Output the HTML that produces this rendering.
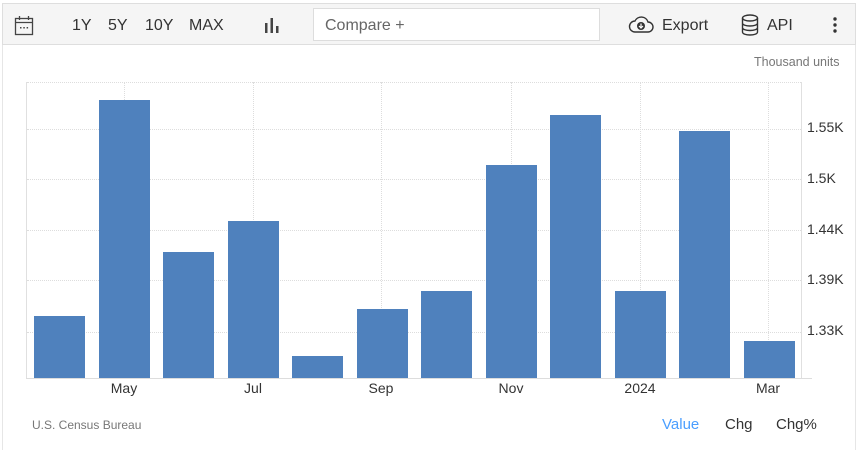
<!DOCTYPE html>
<html><head><style>
body{margin:0;width:858px;height:450px;background:#fff;font-family:"Liberation Sans",Arial,sans-serif;position:relative;overflow:hidden}
.frame{position:absolute;left:2px;top:3px;width:852px;height:447px;border-left:1px solid #e6e6e6;border-right:1px solid #e6e6e6}
.tb{position:absolute;left:2px;top:3px;width:852px;height:40px;background:#f5f5f5;border:1px solid #dedede}
.t{position:absolute;font-size:16px;color:#333;top:17px}
.cmp{position:absolute;left:313px;top:8px;width:287px;height:33px;background:#fff;border:1px solid #ddd;font-size:16px;color:#666;line-height:33px;text-indent:11px;box-sizing:border-box}
.bar{position:absolute;background:#4f81bd;width:51px}
.hg{position:absolute;left:27px;width:774px;border-top:1px dotted #ddd}
.vg{position:absolute;top:82px;height:296px;border-left:1px dotted #ddd}
.yl{position:absolute;left:807px;font-size:14px;color:#333}
.xl{position:absolute;top:380px;font-size:14px;color:#333;transform:translateX(-50%)}
</style></head><body>
<div class="frame"></div>
<div class="tb"></div>
<svg style="position:absolute;left:14px;top:15px" width="20" height="22" viewBox="0 0 20 22"><rect x="1.5" y="3.5" width="17" height="16" fill="none" stroke="#444" stroke-width="1.3"/><line x1="1.5" y1="7.5" x2="18.5" y2="7.5" stroke="#444" stroke-width="1.3"/><line x1="5.5" y1="1" x2="5.5" y2="5" stroke="#444" stroke-width="1.3"/><line x1="14.5" y1="1" x2="14.5" y2="5" stroke="#444" stroke-width="1.3"/><rect x="6" y="12" width="1.5" height="1.5" fill="#444"/><rect x="9.3" y="12" width="1.5" height="1.5" fill="#444"/><rect x="12.6" y="12" width="1.5" height="1.5" fill="#444"/></svg>
<div class="t" style="left:72px">1Y</div>
<div class="t" style="left:108px">5Y</div>
<div class="t" style="left:145px">10Y</div>
<div class="t" style="left:189px">MAX</div>
<svg style="position:absolute;left:264px;top:17px" width="16" height="16"><rect x="1" y="6" width="2.5" height="10" fill="#444"/><rect x="6.5" y="1" width="2.5" height="15" fill="#444"/><rect x="12" y="9" width="2.5" height="7" fill="#444"/></svg>
<div class="cmp">Compare +</div>
<svg style="position:absolute;left:628px;top:15px" width="26" height="20" viewBox="0 0 26 20"><path d="M7 17 H20 a5 5 0 0 0 0-10 a7 7 0 0 0-13-1 a5.5 5.5 0 0 0 0 11z" fill="none" stroke="#333" stroke-width="1.4"/><circle cx="13" cy="11" r="4" fill="#333"/><path d="M13 8.5v4.5M11 11l2 2 2-2" stroke="#fff" stroke-width="1.2" fill="none"/></svg>
<div class="t" style="left:662px">Export</div>
<svg style="position:absolute;left:741px;top:14px" width="18" height="22" viewBox="0 0 18 22"><ellipse cx="9" cy="4" rx="7.5" ry="3" fill="none" stroke="#333" stroke-width="1.4"/><path d="M1.5 4v14c0 4 15 4 15 0V4M1.5 9c0 4 15 4 15 0M1.5 13.5c0 4 15 4 15 0" fill="none" stroke="#333" stroke-width="1.4"/></svg>
<div class="t" style="left:767px">API</div>
<svg style="position:absolute;left:832px;top:17px" width="6" height="16"><circle cx="3" cy="2" r="1.7" fill="#333"/><circle cx="3" cy="8" r="1.7" fill="#333"/><circle cx="3" cy="14" r="1.7" fill="#333"/></svg>
<div style="position:absolute;left:754px;top:55px;font-size:12.5px;color:#777">Thousand units</div>

<div class="hg" style="top:82px"></div>
<div class="hg" style="top:129px"></div>
<div class="hg" style="top:179px"></div>
<div class="hg" style="top:230px"></div>
<div class="hg" style="top:280px"></div>
<div class="hg" style="top:332px"></div>
<div class="vg" style="left:124px"></div>
<div class="vg" style="left:253px"></div>
<div class="vg" style="left:381px"></div>
<div class="vg" style="left:511px"></div>
<div class="vg" style="left:640px"></div>
<div class="vg" style="left:768px"></div>
<div style="position:absolute;left:26px;top:82px;width:1px;height:297px;background:#e0e0e0"></div>
<div style="position:absolute;left:801px;top:82px;width:1px;height:297px;background:#e0e0e0"></div>
<div style="position:absolute;left:26px;top:378px;width:786px;height:1px;background:#ddd"></div>

<div class="bar" style="left:34px;top:316px;height:62px"></div>
<div class="bar" style="left:99px;top:100px;height:278px"></div>
<div class="bar" style="left:163px;top:252px;height:126px"></div>
<div class="bar" style="left:228px;top:221px;height:157px"></div>
<div class="bar" style="left:292px;top:356px;height:22px"></div>
<div class="bar" style="left:357px;top:309px;height:69px"></div>
<div class="bar" style="left:421px;top:291px;height:87px"></div>
<div class="bar" style="left:486px;top:165px;height:213px"></div>
<div class="bar" style="left:550px;top:115px;height:263px"></div>
<div class="bar" style="left:615px;top:291px;height:87px"></div>
<div class="bar" style="left:679px;top:131px;height:247px"></div>
<div class="bar" style="left:744px;top:341px;height:37px"></div>

<div class="yl" style="top:119px">1.55K</div>
<div class="yl" style="top:170px">1.5K</div>
<div class="yl" style="top:221px">1.44K</div>
<div class="yl" style="top:271px">1.39K</div>
<div class="yl" style="top:322px">1.33K</div>

<div class="xl" style="left:124px">May</div>
<div class="xl" style="left:253px">Jul</div>
<div class="xl" style="left:381px">Sep</div>
<div class="xl" style="left:511px">Nov</div>
<div class="xl" style="left:640px">2024</div>
<div class="xl" style="left:768px">Mar</div>

<div style="position:absolute;left:32px;top:418px;font-size:12px;color:#777">U.S. Census Bureau</div>
<div style="position:absolute;left:662px;top:416px;font-size:15px;color:#4a9eff">Value</div>
<div style="position:absolute;left:725px;top:416px;font-size:15px;color:#333">Chg</div>
<div style="position:absolute;left:776px;top:416px;font-size:15px;color:#333">Chg%</div>
</body></html>
